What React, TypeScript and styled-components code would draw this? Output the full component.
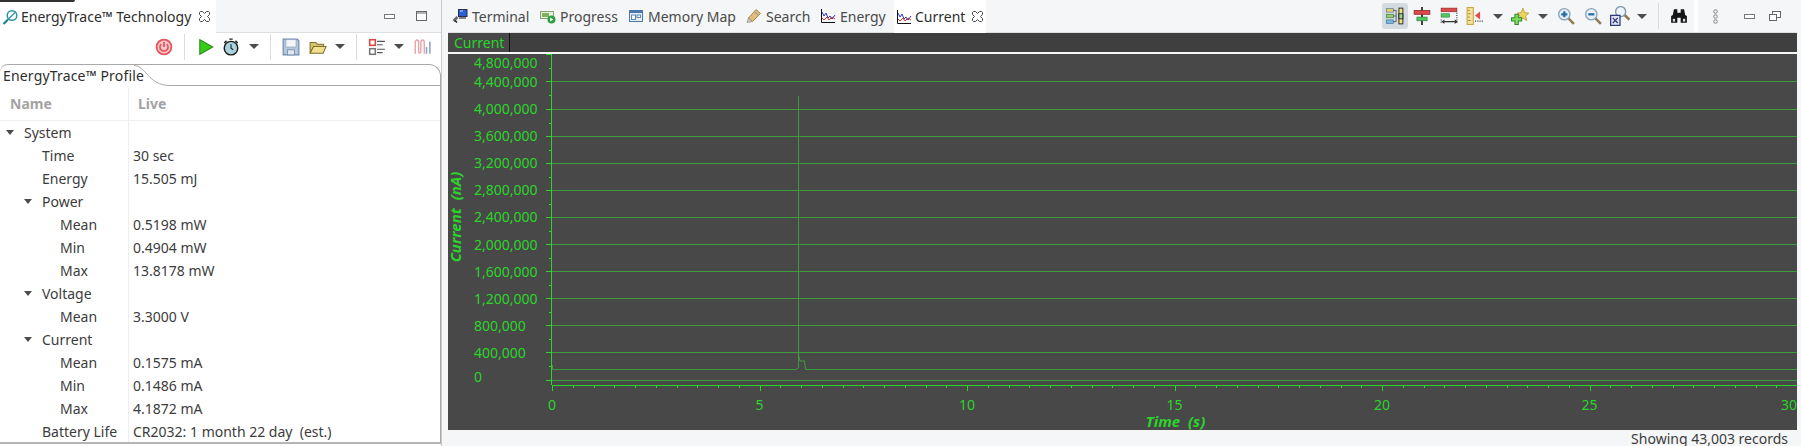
import React from 'react';
import styled, { createGlobalStyle } from 'styled-components';

const GlobalStyle = createGlobalStyle`
  html, body {
    margin: 0;
    padding: 0;
    background: #f5f6f7;
  }
  * {
    box-sizing: border-box;
  }
`;

const UI_FONT = `'Noto Sans', 'Open Sans', sans-serif`;
const GREEN = '#2bd42b';
const GRID = '#3c9c3c';

/* ---------- small icons ---------- */

const Ico: React.FC<{ size?: number; children: React.ReactNode }> = ({ size = 16, children }) => (
  <svg width={size} height={size} viewBox="0 0 16 16" style={{ display: 'block', flex: 'none' }}>
    {children}
  </svg>
);

const CloseIcon = () => (
  <svg width="11" height="11" viewBox="0 0 11 11" style={{ display: 'block', flex: 'none' }}>
    <path
      d="M1.5.5h2l2 2 2-2h2l1 1v2l-2 2 2 2v2l-1 1h-2l-2-2-2 2h-2l-1-1v-2l2-2-2-2v-2z"
      fill="#fff"
      stroke="#444"
      strokeWidth="1"
    />
  </svg>
);

const TraceIcon = () => (
  <Ico>
    <circle cx="10" cy="6.5" r="4.8" fill="none" stroke="#2f93a6" strokeWidth="1.5" />
    <path d="M6.5 10 13.5 3" stroke="#2f93a6" strokeWidth="1.2" />
    <path d="M6 10.5 1.5 15" stroke="#1f7f92" strokeWidth="2.2" />
  </Ico>
);

const TerminalIcon = () => (
  <Ico>
    <rect x="6.5" y="1.5" width="8.5" height="7" fill="#2a62d6" stroke="#26304a" />
    <path d="M8 3h3" stroke="#cfe0ff" />
    <path d="M7 10h7" stroke="#555" strokeWidth="1.4" />
    <path d="M5.5 9 1.5 13" stroke="#666" strokeWidth="2.6" />
    <path d="M3 12.5 5 14.5" stroke="#222" strokeWidth="1.6" />
  </Ico>
);

const ProgressIcon = () => (
  <Ico>
    <rect x="0.5" y="3.5" width="13" height="7" fill="#e8efe2" stroke="#84a06c" />
    <rect x="2" y="5" width="7" height="4" fill="#7fb05c" />
    <circle cx="11.5" cy="11.5" r="4" fill="#2f9e44" />
    <path d="M10.2 9.5v4l3-2z" fill="#fff" />
  </Ico>
);

const MemoryIcon = () => (
  <Ico>
    <rect x="1.5" y="2.5" width="13" height="11" fill="#e6eef7" stroke="#4a78ac" />
    <rect x="1.5" y="2.5" width="13" height="2.5" fill="#4a78ac" />
    <rect x="3.5" y="7" width="4" height="4.5" fill="#fff" stroke="#5b86b8" />
    <rect x="9" y="7" width="3.5" height="2.5" fill="#fff" stroke="#5b86b8" />
  </Ico>
);

const SearchIcon = () => (
  <Ico>
    <path d="M10 1.5 14.5 5.5 6.5 13.5 2.5 10z" fill="#e0bd78" stroke="#b08a48" />
    <path d="M8.5 3.5 12.5 7.5" stroke="#a9a9a0" strokeWidth="1.6" />
    <path d="M2.5 10 1 14.5 6.5 13.5z" fill="#c9c7bd" stroke="#8f8c80" strokeWidth="0.7" />
  </Ico>
);

const GraphIcon = () => (
  <Ico>
    <path d="M1.5 1v13.5H15" fill="none" stroke="#111" />
    <path d="M2 4 4 8 6 5 8 10 10 8 12 11 15 7" fill="none" stroke="#2438c8" strokeWidth="1" />
    <path d="M2 10 4 12 7 9 9 12 12 9 15 11" fill="none" stroke="#d8342c" strokeWidth="1" />
  </Ico>
);

const PowerIcon = () => (
  <Ico size={18}>
    <circle cx="8" cy="8" r="6.6" fill="#f8c8ca" stroke="#e5565c" strokeWidth="1.6" />
    <path d="M5.6 5.4a3.6 3.6 0 1 0 4.8 0" fill="none" stroke="#e5565c" strokeWidth="1.5" />
    <path d="M8 3.6v4.4" stroke="#e5565c" strokeWidth="1.6" />
  </Ico>
);

const PlayIcon = () => (
  <Ico size={18}>
    <path d="M2.5 1.5v13l11.5-6.5z" fill="#39cc16" stroke="#2b8f1a" strokeWidth="1" />
  </Ico>
);

const TimerIcon = () => (
  <Ico size={18}>
    <path d="M2 4.5 4 2.5M14 4.5 12 2.5M6.5 1h3" stroke="#222" strokeWidth="1.3" />
    <circle cx="8" cy="9" r="6" fill="#a8d4e0" stroke="#1c1c1c" strokeWidth="1.3" />
    <path d="M8 5.5V9l2 1.5" fill="none" stroke="#222" />
  </Ico>
);

const SaveIcon = () => (
  <Ico size={18}>
    <path d="M1 1h12.5L15 2.5V15H1z" fill="#b5c7dd" stroke="#6f88aa" />
    <rect x="3.5" y="1.5" width="9" height="6.5" fill="#f3f5f7" stroke="#8ea3bd" strokeWidth="0.6" />
    <rect x="5" y="10.5" width="6" height="4.5" fill="#e4e8ed" stroke="#6f88aa" strokeWidth="0.7" />
  </Ico>
);

const FolderIcon = () => (
  <Ico size={18}>
    <path d="M1 4h5l1.5 1.5H13V8H4L1 13.5z" fill="#d8c468" stroke="#7f6d2a" strokeWidth="0.9" />
    <path d="M4 7.5h11.2L12.5 13.5H1z" fill="#efdf8e" stroke="#7f6d2a" strokeWidth="0.9" />
  </Ico>
);

const ListIcon = () => (
  <Ico size={18}>
    <rect x="1.5" y="1.5" width="5" height="5" fill="#fff" stroke="#d9483e" strokeWidth="1.4" />
    <rect x="1.5" y="9.5" width="5" height="5" fill="#fff" stroke="#777" strokeWidth="1.4" />
    <path d="M8 3h7M8 6h5M8 10h7M8 13h5" stroke="#555" strokeWidth="1.1" />
  </Ico>
);

const ChannelIcon = () => (
  <Ico size={18}>
    <path
      d="M2 14V4c0-3 3-3 3 0v8c0 2 2 2 2 0V4c0-3 3-3 3 0v10"
      fill="none"
      stroke="#e6a0a6"
      strokeWidth="1.2"
    />
    <path d="M12 14V8M15 14V3" stroke="#8ea4c6" strokeWidth="1.4" />
  </Ico>
);

const ColumnsIcon = () => (
  <Ico size={18}>
    <rect x="0.5" y="1.5" width="6" height="3" fill="#e8d66a" stroke="#5f7f8a" strokeWidth="0.7" />
    <rect x="0.5" y="6.5" width="6" height="3" fill="#8fcf7a" stroke="#4f8f3a" strokeWidth="0.7" />
    <rect x="0.5" y="11.5" width="6" height="3" fill="#7fb8dc" stroke="#3f7fa8" strokeWidth="0.7" />
    <path d="M6.5 3h2.5M6.5 8h2.5M6.5 13h2.5M9 3v10" stroke="#445" strokeWidth="0.7" />
    <rect x="11.5" y="1" width="3.5" height="14" fill="#f0e478" stroke="#222" strokeWidth="0.8" />
    <rect x="11.5" y="6" width="3.5" height="4.5" fill="#9ad684" stroke="#222" strokeWidth="0.8" />
  </Ico>
);

const AlignIcon = () => (
  <Ico size={18}>
    <path d="M8 0v16" stroke="#111" strokeWidth="1.4" />
    <rect x="1" y="3" width="14" height="3.5" fill="#e0484a" stroke="#8f2a2a" strokeWidth="0.7" />
    <rect x="3.5" y="9" width="9" height="3.2" fill="#4fc860" stroke="#2f8a3f" strokeWidth="0.7" />
  </Ico>
);

const SpreadIcon = () => (
  <Ico size={18}>
    <rect x="1" y="1" width="14" height="3.2" fill="#e0484a" stroke="#8f2a2a" strokeWidth="0.6" />
    <rect x="1" y="6" width="7.5" height="3" fill="#4fc860" stroke="#2f8a3f" strokeWidth="0.6" />
    <path d="M15 5v10M1 11v4" stroke="#333" strokeDasharray="1 1" />
    <path d="M2 13h13M4 11.5 2 13l2 1.5M13 11.5 15 13l-2 1.5" fill="none" stroke="#333" strokeWidth="0.9" />
  </Ico>
);

const RulerIcon = () => (
  <Ico size={18}>
    <rect x="1" y="0.5" width="5.5" height="15" fill="#f4e29a" stroke="#c8a848" />
    <path d="M1.5 3h2M1.5 6h3M1.5 9h2M1.5 12h3" stroke="#a88a38" strokeWidth="0.8" />
    <path d="M8 7.5 12.5 4v7z" fill="#e64a4a" />
    <path d="M8 12.5h7.5" stroke="#444" strokeDasharray="1 1" />
  </Ico>
);

const AddStarIcon = () => (
  <Ico size={18}>
    <path
      d="M10.5 1 12.2 5 15.8 5.4 13 8 14 12 10.5 10 7.5 12 8 8 5.5 5.4 9 5z"
      fill="#efd25e"
      stroke="#b09430"
      strokeWidth="0.7"
    />
    <path
      d="M3.5 6.5h3v3h3v3h-3v3h-3v-3H.5v-3h3z"
      fill="#7fdc5c"
      stroke="#2f8a2f"
      strokeWidth="0.9"
    />
  </Ico>
);

const MagnifierIcon: React.FC<{ plus?: boolean }> = ({ plus }) => (
  <Ico size={18}>
    <path d="M9.5 9.5 15 15" stroke="#8f7a50" strokeWidth="2.2" />
    <circle cx="6.5" cy="6.5" r="5" fill="#e6f0f8" stroke="#8aa4b8" strokeWidth="1.2" />
    <path d={plus ? 'M3.8 6.5h5.4M6.5 3.8v5.4' : 'M3.8 6.5h5.4'} stroke="#1f6ea8" strokeWidth="2" />
  </Ico>
);

const ZoomFitIcon = () => (
  <Ico size={20}>
    <path d="M11.5 7 15.5 11" stroke="#8f7a50" strokeWidth="2" />
    <circle cx="8.5" cy="4.5" r="4" fill="#eef5fa" stroke="#7d9ab0" strokeWidth="1.1" />
    <rect x="0.5" y="7.5" width="7.5" height="8" fill="#dfe4f5" stroke="#2c3a78" />
    <path d="M2.2 9.5 6.2 13.6M6.2 9.5 2.2 13.6" stroke="#2c3a78" />
  </Ico>
);

const BinocularsIcon = () => (
  <Ico size={18}>
    <path d="M3.5 2h3v3h3V2h3l1 5 1.5 1v6H9.5V9.5h-3V14H1V8l1.5-1z" fill="#151515" />
    <rect x="2.5" y="10.5" width="2" height="2.5" fill="#ddd" />
    <rect x="11.5" y="10.5" width="2" height="2.5" fill="#ddd" />
  </Ico>
);

const ViewMenuIcon = () => (
  <svg width="7" height="15" viewBox="0 0 7 15" style={{ display: 'block' }}>
    <circle cx="3.5" cy="2.5" r="1.8" fill="#eee" stroke="#888" />
    <circle cx="3.5" cy="7.5" r="1.8" fill="#eee" stroke="#888" />
    <circle cx="3.5" cy="12.5" r="1.8" fill="#eee" stroke="#888" />
  </svg>
);

const MinimizeIcon = () => (
  <svg width="11" height="5" viewBox="0 0 11 5" style={{ display: 'block' }}>
    <rect x="0.5" y="0.5" width="10" height="4" fill="#fff" stroke="#777" />
  </svg>
);

const MaximizeIcon = () => (
  <svg width="11" height="10" viewBox="0 0 11 10" style={{ display: 'block' }}>
    <rect x="0.5" y="0.5" width="10" height="9" fill="#fff" stroke="#666" />
    <path d="M1 2h9" stroke="#666" />
  </svg>
);

const RestoreIcon = () => (
  <svg width="12" height="10" viewBox="0 0 12 10" style={{ display: 'block' }}>
    <rect x="3.5" y="0.5" width="8" height="6" fill="#fff" stroke="#666" />
    <rect x="0.5" y="3.5" width="7" height="6" fill="#fff" stroke="#666" />
  </svg>
);

/* ---------- tree data ---------- */

type TreeRow = {
  name: string;
  value?: string;
  level: number;
  open?: boolean;
};

const TREE: TreeRow[] = [
  { name: 'System', level: 0, open: true },
  { name: 'Time', value: '30 sec', level: 1 },
  { name: 'Energy', value: '15.505 mJ', level: 1 },
  { name: 'Power', level: 1, open: true },
  { name: 'Mean', value: '0.5198 mW', level: 2 },
  { name: 'Min', value: '0.4904 mW', level: 2 },
  { name: 'Max', value: '13.8178 mW', level: 2 },
  { name: 'Voltage', level: 1, open: true },
  { name: 'Mean', value: '3.3000 V', level: 2 },
  { name: 'Current', level: 1, open: true },
  { name: 'Mean', value: '0.1575 mA', level: 2 },
  { name: 'Min', value: '0.1486 mA', level: 2 },
  { name: 'Max', value: '4.1872 mA', level: 2 },
  { name: 'Battery Life', value: 'CR2032: 1 month 22 day  (est.)', level: 1 },
];

/* ---------- chart data, in page pixels ---------- */

const Y_ROWS = [
  { label: '4,800,000', tick: 54, text: 63 },
  { label: '4,400,000', tick: 81, text: 82 },
  { label: '4,000,000', tick: 109, text: 109 },
  { label: '3,600,000', tick: 136, text: 136 },
  { label: '3,200,000', tick: 163, text: 163 },
  { label: '2,800,000', tick: 190, text: 190 },
  { label: '2,400,000', tick: 217, text: 217 },
  { label: '2,000,000', tick: 244, text: 245 },
  { label: '1,600,000', tick: 271, text: 272 },
  { label: '1,200,000', tick: 298, text: 299 },
  { label: '800,000', tick: 325, text: 326 },
  { label: '400,000', tick: 352, text: 353 },
  { label: '0', tick: 380, text: 377 },
];

const X_LEFT = 552;
const X_PER_SEC = 41.5;

const Chart = () => {
  const minorY = Y_ROWS.slice(1).map((r, i) => Math.round((r.tick + Y_ROWS[i].tick) / 2));
  const xTicks = Array.from({ length: 61 }, (_, i) => i);
  return (
    <svg width="1349" height="376" style={{ display: 'block' }}>
      <g transform="translate(-448 -54)" fontFamily={UI_FONT} fontSize="14">
        {Y_ROWS.map((r, i) => (
          <g key={r.label}>
            {i > 0 && <path d={`M552 ${r.tick + 0.5}H1797`} stroke={GRID} />}
            <path d={`M546 ${r.tick + 0.5}H551`} stroke={GREEN} />
            <text x="474" y={r.text + 5} fill={GREEN}>
              {r.label}
            </text>
          </g>
        ))}
        {minorY.map((y) => (
          <path key={y} d={`M549 ${y + 0.5}H551`} stroke={GREEN} />
        ))}
        <path d="M551.5 54V385" stroke={GREEN} />
        <path d="M552 385.5H1797" stroke={GREEN} />
        {xTicks.map((i) => {
          const x = Math.round(X_LEFT + i * X_PER_SEC * 0.5) + 0.5;
          return <path key={i} d={`M${x} 385V${i % 10 === 0 ? 391 : 388}`} stroke={GREEN} />;
        })}
        {[0, 5, 10, 15, 20, 25, 30].map((s) => (
          <text
            key={s}
            x={Math.min(X_LEFT + s * X_PER_SEC, 1789)}
            y="410"
            fill={GREEN}
            textAnchor="middle"
          >
            {s}
          </text>
        ))}
        <path
          d="M552.5 365V369.5H796L798.5 368V96.5V355L800 361H804.5L805.5 369.5H1797"
          fill="none"
          stroke={GRID}
        />
        <text
          x="1175.5"
          y="427"
          fontSize="15"
          fontWeight="bold"
          fontStyle="italic"
          fill={GREEN}
          textAnchor="middle"
          xmlSpace="preserve"
        >
          Time  (s)
        </text>
        <text
          transform="translate(461 217) rotate(-90)"
          fontSize="15"
          fontWeight="bold"
          fontStyle="italic"
          fill={GREEN}
          textAnchor="middle"
          xmlSpace="preserve"
        >
          Current  (nA)
        </text>
      </g>
    </svg>
  );
};

/* ---------- page ---------- */

export default function App() {
  return (
    <Page>
      <GlobalStyle />
      <WindowEdge />
      <LeftPanel>
        <TabBar>
          <ActiveTab $width={216} $pad={2}>
            <TraceIcon />
            <TabTitle>EnergyTrace™ Technology</TabTitle>
            <CloseSlot $right={6}>
              <CloseIcon />
            </CloseSlot>
          </ActiveTab>
          <TabFill />
          <ToolSlot $w={38}>
            <MinimizeIcon />
          </ToolSlot>
          <ToolSlot $w={26}>
            <MaximizeIcon />
          </ToolSlot>
          <ToolSlot $w={7} />
        </TabBar>
        <Toolbar>
          <ToolSlot $w={24}>
            <PowerIcon />
          </ToolSlot>
          <ToolSlot $w={17}>
            <Rule />
          </ToolSlot>
          <ToolSlot $w={26}>
            <PlayIcon />
          </ToolSlot>
          <ToolSlot $w={24}>
            <TimerIcon />
          </ToolSlot>
          <ToolSlot $w={22}>
            <Caret />
          </ToolSlot>
          <ToolSlot $w={11}>
            <Rule />
          </ToolSlot>
          <ToolSlot $w={30}>
            <SaveIcon />
          </ToolSlot>
          <ToolSlot $w={24}>
            <FolderIcon />
          </ToolSlot>
          <ToolSlot $w={20}>
            <Caret />
          </ToolSlot>
          <ToolSlot $w={13}>
            <Rule />
          </ToolSlot>
          <ToolSlot $w={28}>
            <ListIcon />
          </ToolSlot>
          <ToolSlot $w={16}>
            <Caret />
          </ToolSlot>
          <ToolSlot $w={30}>
            <ChannelIcon />
          </ToolSlot>
        </Toolbar>
        <FormFrame>
          <FormHead>
            <FormTitle>EnergyTrace™ Profile</FormTitle>
            <svg width="36" height="21" viewBox="0 0 36 21" style={{ display: 'block', flex: 'none' }}>
              <path d="M0 .5C12 .5 14 20.5 36 20.5" fill="none" stroke="#a9a9a9" />
            </svg>
            <FormHeadRest />
          </FormHead>
          <HeaderRow>
            <HeaderName>Name</HeaderName>
            <HeaderValue>Live</HeaderValue>
          </HeaderRow>
          {TREE.map((row, i) => (
            <Row key={i}>
              <NameCell $level={row.level}>
                <Twisty>{row.open && <Caret $small />}</Twisty>
                {row.name}
              </NameCell>
              <ValueCell>{row.value}</ValueCell>
            </Row>
          ))}
        </FormFrame>
      </LeftPanel>
      <RightPanel>
        <TabBar>
          <Tab $width={88}>
            <TerminalIcon />
            <TabLabel>Terminal</TabLabel>
          </Tab>
          <Tab $width={88}>
            <ProgressIcon />
            <TabLabel>Progress</TabLabel>
          </Tab>
          <Tab $width={118}>
            <MemoryIcon />
            <TabLabel>Memory Map</TabLabel>
          </Tab>
          <Tab $width={74}>
            <SearchIcon />
            <TabLabel>Search</TabLabel>
          </Tab>
          <Tab $width={78}>
            <GraphIcon />
            <TabLabel>Energy</TabLabel>
          </Tab>
          <ActiveTab $width={92} $pad={2}>
            <GraphIcon />
            <TabTitle>Current</TabTitle>
            <CloseSlot $right={3}>
              <CloseIcon />
            </CloseSlot>
          </ActiveTab>
          <TabFill />
          <ToolSlot $w={26} $selected>
            <ColumnsIcon />
          </ToolSlot>
          <ToolSlot $w={27}>
            <AlignIcon />
          </ToolSlot>
          <ToolSlot $w={27}>
            <SpreadIcon />
          </ToolSlot>
          <ToolSlot $w={26}>
            <RulerIcon />
          </ToolSlot>
          <ToolSlot $w={20}>
            <Caret />
          </ToolSlot>
          <ToolSlot $w={24}>
            <AddStarIcon />
          </ToolSlot>
          <ToolSlot $w={22}>
            <Caret />
          </ToolSlot>
          <ToolSlot $w={24}>
            <MagnifierIcon plus />
          </ToolSlot>
          <ToolSlot $w={30}>
            <MagnifierIcon />
          </ToolSlot>
          <ToolSlot $w={24}>
            <ZoomFitIcon />
          </ToolSlot>
          <ToolSlot $w={20}>
            <Caret />
          </ToolSlot>
          <ToolSlot $w={12}>
            <Rule />
          </ToolSlot>
          <ToolSlot $w={30}>
            <BinocularsIcon />
          </ToolSlot>
          <Gutter />
          <ToolSlot $w={34}>
            <ViewMenuIcon />
          </ToolSlot>
          <ToolSlot $w={34}>
            <MinimizeIcon />
          </ToolSlot>
          <ToolSlot $w={18}>
            <RestoreIcon />
          </ToolSlot>
          <ToolSlot $w={13} />
        </TabBar>
        <ChartHeader>
          <ChartTitle>Current</ChartTitle>
        </ChartHeader>
        <ChartArea>
          <Chart />
        </ChartArea>
        <StatusBar>Showing 43,003 records</StatusBar>
      </RightPanel>
    </Page>
  );
}

const Page = styled.div`
  position: relative;
  display: flex;
  width: 1801px;
  height: 446px;
  overflow: hidden;
  background: #f5f6f7;
  color: #3c3c3c;
  font-family: ${UI_FONT};
  font-size: 14px;
`;

const WindowEdge = styled.div`
  position: absolute;
  left: 0;
  top: 0;
  width: 75px;
  height: 2px;
  background: #333;
  border-radius: 0 0 3px 0;
`;

const LeftPanel = styled.div`
  display: flex;
  flex-direction: column;
  width: 442px;
  height: 446px;
  flex: none;
  border-right: 1px solid #c9c9c9;
  background: #fff;
`;

const RightPanel = styled.div`
  display: flex;
  flex-direction: column;
  width: 1349px;
  height: 446px;
  flex: none;
  margin-left: 6px;
`;

const TabBar = styled.div`
  display: flex;
  align-items: center;
  height: 33px;
  flex: none;
  background: #f5f6f7;
  border-bottom: 1px solid #dedfe0;
`;

const TabFill = styled.div`
  flex: 1;
  align-self: stretch;
`;

const Tab = styled.div<{ $width: number }>`
  display: flex;
  align-items: center;
  gap: 4px;
  width: ${(p) => p.$width}px;
  height: 32px;
  flex: none;
  padding-left: 4px;
  color: #4a4a4a;
  white-space: pre;
`;

const ActiveTab = styled.div<{ $width: number; $pad: number }>`
  display: flex;
  align-items: center;
  gap: 3px;
  width: ${(p) => p.$width}px;
  height: 33px;
  margin-bottom: -1px;
  flex: none;
  padding-left: ${(p) => p.$pad}px;
  background: #fff;
  color: #2e2e2e;
  white-space: pre;
`;

const TabLabel = styled.span``;

const TabTitle = styled.span``;

const CloseSlot = styled.span<{ $right: number }>`
  display: flex;
  margin-left: auto;
  margin-right: ${(p) => p.$right}px;
`;

const ToolSlot = styled.div<{ $w: number; $selected?: boolean }>`
  display: flex;
  align-items: center;
  justify-content: center;
  width: ${(p) => p.$w}px;
  height: 26px;
  flex: none;
  border-radius: 3px;
  background: ${(p) => (p.$selected ? '#d3dbe0' : 'transparent')};
`;

const Rule = styled.div`
  width: 1px;
  height: 26px;
  background: #dcdcdc;
`;

const Caret = styled.div<{ $small?: boolean }>`
  width: 0;
  height: 0;
  border-left: ${(p) => (p.$small ? 4.5 : 5)}px solid transparent;
  border-right: ${(p) => (p.$small ? 4.5 : 5)}px solid transparent;
  border-top: 5px solid #4c4c4c;
`;

const Gutter = styled.div`
  width: 4px;
  height: 32px;
  flex: none;
  background: #fff;
`;

const Toolbar = styled.div`
  display: flex;
  align-items: center;
  justify-content: flex-end;
  height: 27px;
  flex: none;
  padding-right: 4px;
  background: #fff;
`;

const FormFrame = styled.div`
  display: flex;
  flex-direction: column;
  height: 380px;
  margin-top: 4px;
  border-top: 1px solid #a9a9a9;
  border-bottom: 2px solid #b5b5b5;
  border-right: 1px solid #a9a9a9;
  border-radius: 8px 12px 0 0;
  overflow: hidden;
`;

const FormHead = styled.div`
  display: flex;
  height: 21px;
  flex: none;
`;

const FormTitle = styled.div`
  width: 134px;
  padding-left: 3px;
  line-height: 21px;
  letter-spacing: 0.17px;
  flex: none;
  white-space: pre;
  color: #2e2e2e;
`;

const FormHeadRest = styled.div`
  flex: 1;
  border-bottom: 1px solid #a9a9a9;
`;

const HeaderRow = styled.div`
  display: flex;
  height: 35px;
  flex: none;
  padding-top: 2px;
  border-bottom: 1px solid #eeeeee;
  color: #a3a3a3;
  font-weight: 700;
  line-height: 32px;
`;

const HeaderName = styled.div`
  width: 129px;
  flex: none;
  padding-left: 10px;
  border-right: 1px solid #eeeeee;
`;

const HeaderValue = styled.div`
  padding-left: 9px;
`;

const Row = styled.div`
  display: flex;
  height: 23px;
  flex: none;
  line-height: 23px;
`;

const NameCell = styled.div<{ $level: number }>`
  display: flex;
  align-items: center;
  width: 129px;
  flex: none;
  padding-left: ${(p) => 6 + p.$level * 18}px;
  border-right: 1px solid #eeeeee;
  white-space: pre;
`;

const Twisty = styled.span`
  display: flex;
  align-items: center;
  width: 18px;
  flex: none;
`;

const ValueCell = styled.div`
  padding-left: 4px;
  white-space: pre;
`;

const ChartHeader = styled.div`
  display: flex;
  height: 19px;
  flex: none;
  background: #3f3f3f;
`;

const ChartTitle = styled.div`
  width: 62px;
  padding-left: 6px;
  background: #484848;
  border-right: 1px solid #111;
  color: ${GREEN};
  line-height: 20px;
`;

const ChartArea = styled.div`
  height: 376px;
  flex: none;
  margin-top: 2px;
  background: #484848;
  overflow: hidden;
`;

const StatusBar = styled.div`
  height: 16px;
  flex: none;
  padding-right: 9px;
  text-align: right;
  line-height: 17px;
  overflow: hidden;
  background: #f5f6f7;
`;
